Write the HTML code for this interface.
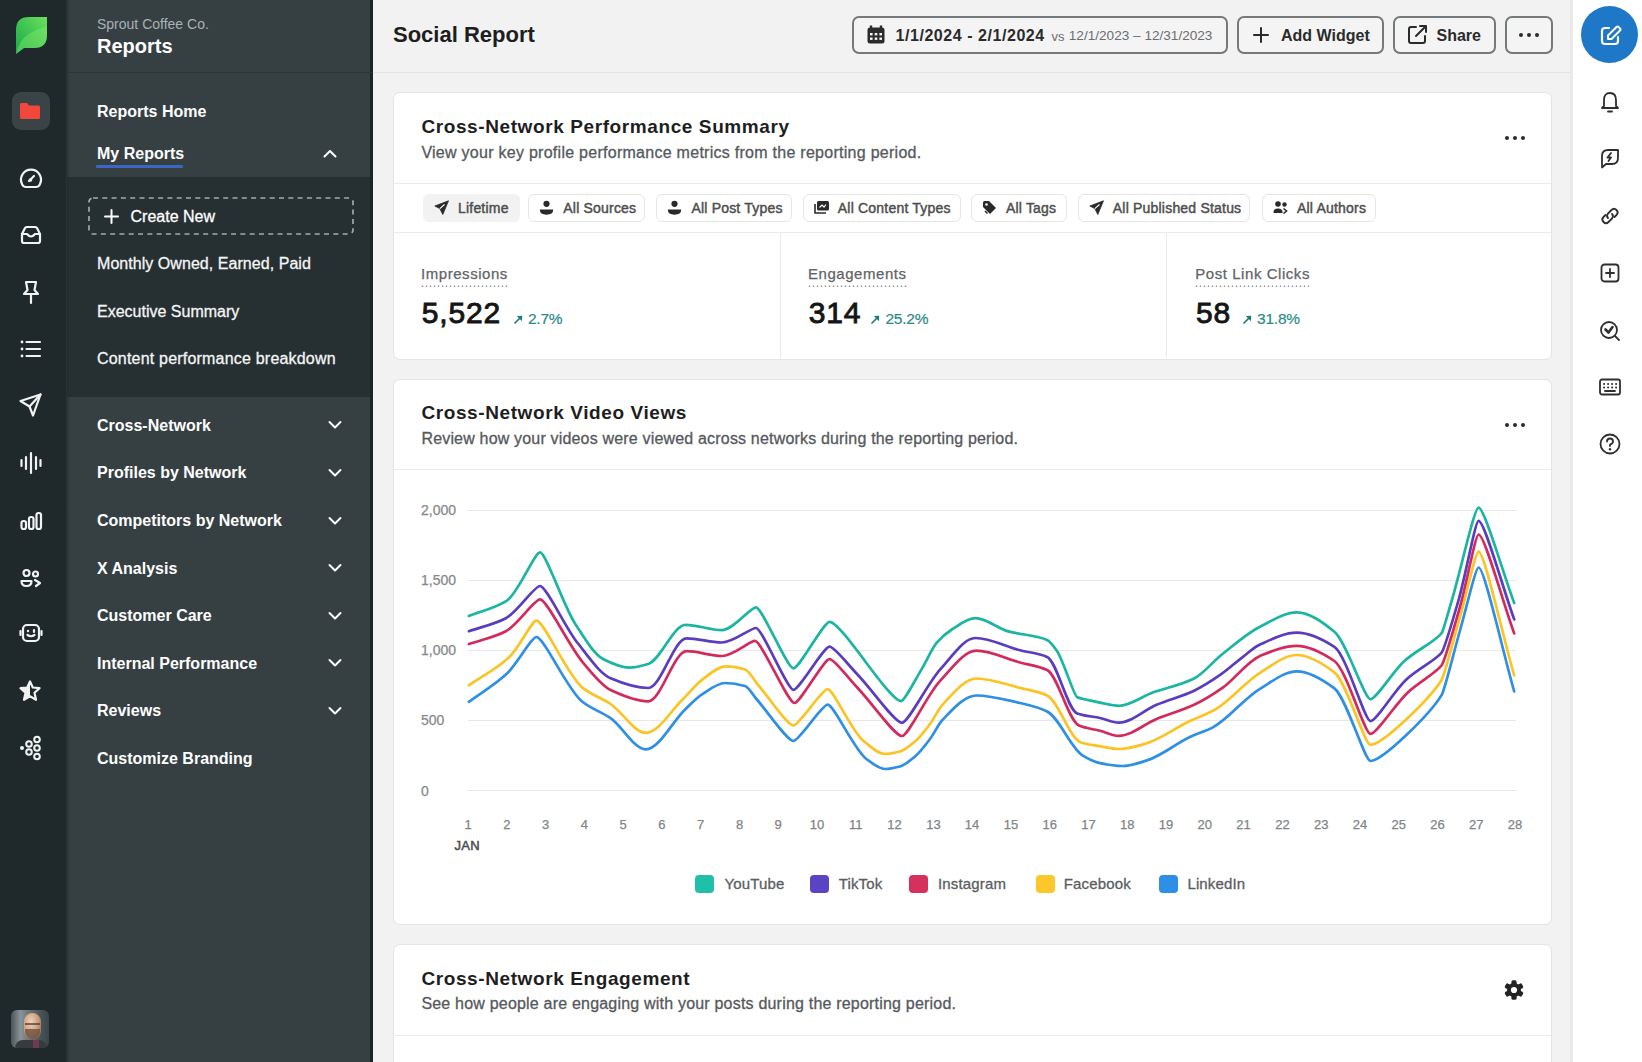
<!DOCTYPE html><html><head><meta charset="utf-8"><style>
html,body{margin:0;padding:0;width:1642px;height:1062px;overflow:hidden;background:#f2f2f2;font-family:"Liberation Sans", sans-serif;}
.t{position:absolute;line-height:1;white-space:nowrap;font-family:"Liberation Sans", sans-serif;}
svg{overflow:visible}
</style></head><body>
<div style="position:absolute;left:0px;top:0px;width:66px;height:1062px;background:#1f292b;"></div>
<div style="position:absolute;left:66px;top:0px;width:307px;height:1062px;background:#364043;"></div>
<div style="position:absolute;left:67px;top:177px;width:306px;height:220px;background:#263032;"></div>
<div style="position:absolute;left:370px;top:0px;width:3px;height:1062px;background:#1c2526;"></div>
<div style="position:absolute;left:64px;top:0px;width:6px;height:1062px;background:linear-gradient(90deg,#1f292b,rgba(31,41,43,0));"></div>
<svg style="position:absolute;left:15px;top:16px;" width="33" height="39" viewBox="0 0 33 39"><defs><linearGradient id="lg" x1="0" y1="1" x2="1" y2="0"><stop offset="0" stop-color="#17a84a"/><stop offset="1" stop-color="#6be05c"/></linearGradient></defs>
<path d="M1,38 L1,14 Q1,1 14,1 L32,1 L32,19 Q32,32 19,32 L9,32 Z" fill="url(#lg)"/>
<path d="M1,38 Q4,24 14,18 Q22,13 32,10 L32,19 Q32,32 19,32 L9,32 Z" fill="#7ee86a" opacity="0.45"/></svg>
<div style="position:absolute;left:12px;top:92px;width:38px;height:38px;background:#3a4447;border-radius:9px;"></div>
<svg style="position:absolute;left:20px;top:103px;" width="20" height="16" viewBox="0 0 20 16"><path d="M0,1.5 Q0,0 1.5,0 L7,0 L9,2.5 L18.5,2.5 Q20,2.5 20,4 L20,14.5 Q20,16 18.5,16 L1.5,16 Q0,16 0,14.5 Z" fill="#f2473a"/></svg>
<svg style="position:absolute;left:20px;top:169px;" width="22" height="20" viewBox="0 0 22 20"><path d="M2,15 A10,10 0 1 1 20,15 Q19,18 16,18 L6,18 Q3,18 2,15 Z" stroke="#f1f3f3" stroke-width="2.2" fill="none" stroke-linecap="round" stroke-linejoin="round"/><path d="M9,12 L14,7" stroke="#f1f3f3" stroke-width="2.2" fill="none" stroke-linecap="round" stroke-linejoin="round"/><circle cx="10.5" cy="11" r="1.8" fill="#f1f3f3"/></svg>
<svg style="position:absolute;left:20px;top:226px;" width="22" height="18" viewBox="0 0 22 18"><path d="M2,8 L5,2 Q6,1 7,1 L15,1 Q16,1 17,2 L20,8 L20,15 Q20,17 18,17 L4,17 Q2,17 2,15 Z" stroke="#f1f3f3" stroke-width="2.2" fill="none" stroke-linecap="round" stroke-linejoin="round"/><path d="M2,8 L7,8 Q11,13 15,8 L20,8" stroke="#f1f3f3" stroke-width="2.2" fill="none" stroke-linecap="round" stroke-linejoin="round"/></svg>
<svg style="position:absolute;left:21px;top:281px;" width="20" height="23" viewBox="0 0 20 23"><path d="M5,1 L15,1 L13.5,9 L17,13 L3,13 L6.5,9 Z" stroke="#f1f3f3" stroke-width="2.2" fill="none" stroke-linecap="round" stroke-linejoin="round"/><path d="M10,13 L10,22" stroke="#f1f3f3" stroke-width="2.2" fill="none" stroke-linecap="round" stroke-linejoin="round"/></svg>
<svg style="position:absolute;left:20px;top:340px;" width="21" height="18" viewBox="0 0 21 18"><circle cx="2" cy="2" r="1.4" fill="#f1f3f3"/><circle cx="2" cy="9" r="1.4" fill="#f1f3f3"/><circle cx="2" cy="16" r="1.4" fill="#f1f3f3"/><path d="M6.5,2 L20,2 M6.5,9 L20,9 M6.5,16 L20,16" stroke="#f1f3f3" stroke-width="2.2" fill="none" stroke-linecap="round" stroke-linejoin="round"/></svg>
<svg style="position:absolute;left:19px;top:393px;" width="23" height="24" viewBox="0 0 23 24"><path d="M1.5,8 L21.5,1.5 L14,22.5 L10.5,13.5 Z" stroke="#f1f3f3" stroke-width="2.2" fill="none" stroke-linecap="round" stroke-linejoin="round"/><path d="M10.5,13.5 L21.5,1.5" stroke="#f1f3f3" stroke-width="2.2" fill="none" stroke-linecap="round" stroke-linejoin="round"/></svg>
<svg style="position:absolute;left:20px;top:452px;" width="22" height="22" viewBox="0 0 22 22"><path d="M1.5,8 L1.5,14 M6,5 L6,17 M11,1 L11,21 M16,5 L16,17 M20.5,8 L20.5,14" stroke="#f1f3f3" stroke-width="2.2" fill="none" stroke-linecap="round" stroke-linejoin="round"/></svg>
<svg style="position:absolute;left:20px;top:512px;" width="23" height="18" viewBox="0 0 23 18"><rect x="1.5" y="9" width="4.5" height="8" rx="2" stroke="#f1f3f3" stroke-width="2.2" fill="none" stroke-linecap="round" stroke-linejoin="round"/><rect x="9" y="5" width="4.5" height="12" rx="2" stroke="#f1f3f3" stroke-width="2.2" fill="none" stroke-linecap="round" stroke-linejoin="round"/><rect x="16.5" y="1" width="4.5" height="16" rx="2" stroke="#f1f3f3" stroke-width="2.2" fill="none" stroke-linecap="round" stroke-linejoin="round"/></svg>
<svg style="position:absolute;left:20px;top:569px;" width="22" height="19" viewBox="0 0 22 19"><circle cx="6.5" cy="4" r="3" stroke="#f1f3f3" stroke-width="2.2" fill="none" stroke-linecap="round" stroke-linejoin="round"/><circle cx="15.5" cy="5" r="2.5" stroke="#f1f3f3" stroke-width="2.2" fill="none" stroke-linecap="round" stroke-linejoin="round"/><path d="M1.5,12 Q1.5,17 6.5,17 Q11.5,17 11.5,12 Z" stroke="#f1f3f3" stroke-width="2.2" fill="none" stroke-linecap="round" stroke-linejoin="round"/><path d="M15,11 L20,14 L16,17" stroke="#f1f3f3" stroke-width="2.2" fill="none" stroke-linecap="round" stroke-linejoin="round"/></svg>
<svg style="position:absolute;left:19px;top:623px;" width="24" height="20" viewBox="0 0 24 20"><rect x="4" y="2" width="16" height="16" rx="4" stroke="#f1f3f3" stroke-width="2.2" fill="none" stroke-linecap="round" stroke-linejoin="round"/><path d="M1.5,8 L1.5,12 M22.5,8 L22.5,12" stroke="#f1f3f3" stroke-width="2.2" fill="none" stroke-linecap="round" stroke-linejoin="round"/><circle cx="9" cy="8" r="1.2" fill="#f1f3f3"/><path d="M8.5,12 Q12,14.5 15.5,12 M15,7 L15,9" stroke="#f1f3f3" stroke-width="2.2" fill="none" stroke-linecap="round" stroke-linejoin="round"/></svg>
<svg style="position:absolute;left:19px;top:680px;" width="22" height="22" viewBox="0 0 22 22"><path d="M11,1.5 L13.8,7.5 L20.5,8.2 L15.5,12.8 L17,19.8 L11,16.3 L5,19.8 L6.5,12.8 L1.5,8.2 L8.2,7.5 Z" stroke="#f1f3f3" stroke-width="2.2" fill="none" stroke-linecap="round" stroke-linejoin="round"/><path d="M11,1.5 L8.2,7.5 L1.5,8.2 L6.5,12.8 L5,19.8 L11,16.3 Z" fill="#f1f3f3"/></svg>
<svg style="position:absolute;left:19px;top:736px;" width="23" height="25" viewBox="0 0 23 25"><circle cx="3" cy="12" r="2" fill="#f1f3f3"/><circle cx="10" cy="8" r="2.8" fill="none" stroke="#f1f3f3" stroke-width="2"/><circle cx="10" cy="16" r="2.8" fill="none" stroke="#f1f3f3" stroke-width="2"/><circle cx="18" cy="3.5" r="2.8" fill="none" stroke="#f1f3f3" stroke-width="2"/><circle cx="18" cy="12" r="2.8" fill="none" stroke="#f1f3f3" stroke-width="2"/><circle cx="18" cy="20.5" r="2.8" fill="none" stroke="#f1f3f3" stroke-width="2"/></svg>
<div style="position:absolute;left:11px;top:1010px;width:38px;height:38px;border-radius:6px;overflow:hidden;background:linear-gradient(90deg,#4b5558 0%,#8a9498 25%,#6d777b 45%,#4a5659 75%,#39454a 100%);">
<div style="position:absolute;left:13px;top:3px;width:17px;height:26px;border-radius:9px 9px 8px 8px;background:radial-gradient(ellipse at 40% 35%,#f0d2b8 0%,#c89a7a 55%,#6e5040 100%);"></div>
<div style="position:absolute;left:14px;top:13px;width:15px;height:2px;background:#4a3830;opacity:0.7;"></div>
<div style="position:absolute;left:14px;top:19px;width:15px;height:10px;border-radius:0 0 8px 8px;background:#6a4c3c;opacity:0.75;"></div>
<div style="position:absolute;left:4px;top:30px;width:32px;height:10px;border-radius:8px 8px 0 0;background:#353b3e;"></div>
<div style="position:absolute;left:22px;top:30px;width:6px;height:8px;background:#6e3c4e;"></div>
</div>
<div class="t" style="left:97px;top:16.90px;font-size:14px;font-weight:400;color:#aab1b3;letter-spacing:0px;">Sprout Coffee Co.</div>
<div class="t" style="left:97px;top:35.60px;font-size:20px;font-weight:700;color:#ffffff;letter-spacing:0px;">Reports</div>
<div style="position:absolute;left:66px;top:72px;width:307px;height:1px;background:#2b3437;"></div>
<div class="t" style="left:97px;top:104.40px;font-size:16px;font-weight:700;color:#ffffff;letter-spacing:0px;">Reports Home</div>
<div class="t" style="left:97px;top:146.40px;font-size:16px;font-weight:700;color:#ffffff;letter-spacing:0px;">My Reports</div>
<div style="position:absolute;left:96px;top:165px;width:87px;height:3px;background:#3d66c4;border-radius:1px;"></div>
<svg style="position:absolute;left:323px;top:149px;" width="14" height="9" viewBox="0 0 14 9"><path d="M1.5,7.5 L7,2 L12.5,7.5" stroke="#fff" stroke-width="2" fill="none" stroke-linecap="round" stroke-linejoin="round"/></svg>
<svg style="position:absolute;left:88px;top:197px;" width="266" height="38" viewBox="0 0 266 38"><rect x="1" y="1" width="264" height="36" rx="4" fill="none" stroke="#a3a9ab" stroke-width="1.7" stroke-dasharray="5 4.3"/></svg>
<svg style="position:absolute;left:104px;top:209px;" width="15" height="15" viewBox="0 0 15 15"><path d="M7.5,1 L7.5,14 M1,7.5 L14,7.5" stroke="#fff" stroke-width="2" fill="none" stroke-linecap="round"/></svg>
<div class="t" style="left:130.5px;top:208.80px;font-size:16px;font-weight:400;color:#ffffff;letter-spacing:0px;-webkit-text-stroke:0.3px #fff;">Create New</div>
<div class="t" style="left:97px;top:256.40px;font-size:16px;font-weight:400;color:#f4f5f5;letter-spacing:0.05px;-webkit-text-stroke:0.3px #f4f5f5;">Monthly Owned, Earned, Paid</div>
<div class="t" style="left:97px;top:304.10px;font-size:16px;font-weight:400;color:#f4f5f5;letter-spacing:0px;-webkit-text-stroke:0.3px #f4f5f5;">Executive Summary</div>
<div class="t" style="left:97px;top:351.40px;font-size:16px;font-weight:400;color:#f4f5f5;letter-spacing:0.2px;-webkit-text-stroke:0.3px #f4f5f5;">Content performance breakdown</div>
<div class="t" style="left:97px;top:417.80px;font-size:16px;font-weight:700;color:#ffffff;letter-spacing:0px;">Cross-Network</div>
<svg style="position:absolute;left:328px;top:420.4px;" width="14" height="10" viewBox="0 0 14 10"><path d="M1.5,2 L7,7.5 L12.5,2" stroke="#fff" stroke-width="2" fill="none" stroke-linecap="round" stroke-linejoin="round"/></svg>
<div class="t" style="left:97px;top:465.40px;font-size:16px;font-weight:700;color:#ffffff;letter-spacing:0px;">Profiles by Network</div>
<svg style="position:absolute;left:328px;top:468.0px;" width="14" height="10" viewBox="0 0 14 10"><path d="M1.5,2 L7,7.5 L12.5,2" stroke="#fff" stroke-width="2" fill="none" stroke-linecap="round" stroke-linejoin="round"/></svg>
<div class="t" style="left:97px;top:513.00px;font-size:16px;font-weight:700;color:#ffffff;letter-spacing:0px;">Competitors by Network</div>
<svg style="position:absolute;left:328px;top:515.6px;" width="14" height="10" viewBox="0 0 14 10"><path d="M1.5,2 L7,7.5 L12.5,2" stroke="#fff" stroke-width="2" fill="none" stroke-linecap="round" stroke-linejoin="round"/></svg>
<div class="t" style="left:97px;top:560.60px;font-size:16px;font-weight:700;color:#ffffff;letter-spacing:0px;">X Analysis</div>
<svg style="position:absolute;left:328px;top:563.2px;" width="14" height="10" viewBox="0 0 14 10"><path d="M1.5,2 L7,7.5 L12.5,2" stroke="#fff" stroke-width="2" fill="none" stroke-linecap="round" stroke-linejoin="round"/></svg>
<div class="t" style="left:97px;top:608.20px;font-size:16px;font-weight:700;color:#ffffff;letter-spacing:0px;">Customer Care</div>
<svg style="position:absolute;left:328px;top:610.8px;" width="14" height="10" viewBox="0 0 14 10"><path d="M1.5,2 L7,7.5 L12.5,2" stroke="#fff" stroke-width="2" fill="none" stroke-linecap="round" stroke-linejoin="round"/></svg>
<div class="t" style="left:97px;top:655.80px;font-size:16px;font-weight:700;color:#ffffff;letter-spacing:0px;">Internal Performance</div>
<svg style="position:absolute;left:328px;top:658.4px;" width="14" height="10" viewBox="0 0 14 10"><path d="M1.5,2 L7,7.5 L12.5,2" stroke="#fff" stroke-width="2" fill="none" stroke-linecap="round" stroke-linejoin="round"/></svg>
<div class="t" style="left:97px;top:703.40px;font-size:16px;font-weight:700;color:#ffffff;letter-spacing:0px;">Reviews</div>
<svg style="position:absolute;left:328px;top:706.0px;" width="14" height="10" viewBox="0 0 14 10"><path d="M1.5,2 L7,7.5 L12.5,2" stroke="#fff" stroke-width="2" fill="none" stroke-linecap="round" stroke-linejoin="round"/></svg>
<div class="t" style="left:97px;top:751.00px;font-size:16px;font-weight:700;color:#ffffff;letter-spacing:0px;">Customize Branding</div>
<div style="position:absolute;left:373px;top:72px;width:1200px;height:1px;background:#e3e3e3;"></div>
<div class="t" style="left:393px;top:24.30px;font-size:22px;font-weight:700;color:#1e1e1e;letter-spacing:0px;">Social Report</div>
<div style="position:absolute;left:852px;top:16px;width:376px;height:38px;box-sizing:border-box;border:2px solid #75797b;border-radius:7px;background:#f4f4f4;"></div>
<svg style="position:absolute;left:867px;top:25px;" width="18" height="19" viewBox="0 0 18 19"><path d="M4,0.5 L4,4 M14,0.5 L14,4" stroke="#2b2b2b" stroke-width="2.4"/><rect x="0.5" y="2.5" width="17" height="16" rx="2.5" fill="#2b2b2b"/><rect x="3" y="8" width="2.6" height="2.4" fill="#f4f4f4"/><rect x="3" y="12.5" width="2.6" height="2.4" fill="#f4f4f4"/><rect x="7.7" y="8" width="2.6" height="2.4" fill="#f4f4f4"/><rect x="7.7" y="12.5" width="2.6" height="2.4" fill="#f4f4f4"/><rect x="12.4" y="8" width="2.6" height="2.4" fill="#f4f4f4"/><rect x="12.4" y="12.5" width="2.6" height="2.4" fill="#f4f4f4"/></svg>
<div class="t" style="left:895.5px;top:27.80px;font-size:16px;font-weight:700;color:#2b2b2b;letter-spacing:0.55px;">1/1/2024 - 2/1/2024</div>
<div class="t" style="left:1051.5px;top:29.95px;font-size:13px;font-weight:400;color:#6b6e70;letter-spacing:0px;">vs</div>
<div class="t" style="left:1068.8px;top:29.44px;font-size:13.6px;font-weight:400;color:#6b6e70;letter-spacing:0px;">12/1/2023 – 12/31/2023</div>
<div style="position:absolute;left:1237px;top:16px;width:147px;height:38px;box-sizing:border-box;border:2px solid #75797b;border-radius:7px;background:#f4f4f4;"></div>
<svg style="position:absolute;left:1253px;top:27px;" width="16" height="16" viewBox="0 0 16 16"><path d="M8,1 L8,15 M1,8 L15,8" stroke="#2b2b2b" stroke-width="2" fill="none" stroke-linecap="round"/></svg>
<div class="t" style="left:1281px;top:28.20px;font-size:16px;font-weight:700;color:#2b2b2b;letter-spacing:0px;">Add Widget</div>
<div style="position:absolute;left:1393px;top:16px;width:103px;height:38px;box-sizing:border-box;border:2px solid #75797b;border-radius:7px;background:#f4f4f4;"></div>
<svg style="position:absolute;left:1407px;top:24px;" width="21" height="21" viewBox="0 0 21 21"><path d="M9,3 L4,3 Q2,3 2,5 L2,17 Q2,19 4,19 L16,19 Q18,19 18,17 L18,12" stroke="#2b2b2b" stroke-width="2" fill="none" stroke-linecap="round" stroke-linejoin="round"/><path d="M9,12 L19,2 M13,2 L19,2 L19,8" stroke="#2b2b2b" stroke-width="2" fill="none" stroke-linecap="round" stroke-linejoin="round"/></svg>
<div class="t" style="left:1436.5px;top:28.20px;font-size:16px;font-weight:700;color:#2b2b2b;letter-spacing:0px;">Share</div>
<div style="position:absolute;left:1505px;top:16px;width:48px;height:38px;box-sizing:border-box;border:2px solid #75797b;border-radius:7px;background:#f4f4f4;"></div>
<div style="position:absolute;left:1519px;top:33px;width:4px;height:4px;background:#2b2b2b;border-radius:50%;"></div>
<div style="position:absolute;left:1527px;top:33px;width:4px;height:4px;background:#2b2b2b;border-radius:50%;"></div>
<div style="position:absolute;left:1535px;top:33px;width:4px;height:4px;background:#2b2b2b;border-radius:50%;"></div>
<div style="position:absolute;left:1570px;top:0px;width:3px;height:1062px;background:#e9e9e9;"></div>
<div style="position:absolute;left:1573px;top:0px;width:69px;height:1062px;background:#ffffff;"></div>
<div style="position:absolute;left:1581px;top:6px;width:57px;height:57px;background:#1f77c7;border-radius:50%;"></div>
<svg style="position:absolute;left:1600px;top:25px;" width="21" height="21" viewBox="0 0 21 21"><path d="M9,3 L5,3 Q2,3 2,6 L2,16 Q2,19 5,19 L15,19 Q18,19 18,16 L18,12" stroke="#fff" stroke-width="2.2" fill="none" stroke-linecap="round" stroke-linejoin="round"/><path d="M8,14 L8,10.5 L16.5,2 Q17.5,1 18.5,2 L20,3.5 Q21,4.5 20,5.5 L11.5,14 Z" stroke="#fff" stroke-width="2" fill="none" stroke-linejoin="round"/></svg>
<svg style="position:absolute;left:1600px;top:91px;" width="20" height="23" viewBox="0 0 20 23"><path d="M2,17 L4,15 L4,9 Q4,2 10,2 Q16,2 16,9 L16,15 L18,17 Z" stroke="#2e2e2e" stroke-width="1.8" fill="none" stroke-linecap="round" stroke-linejoin="round"/><path d="M8,20.5 L12,20.5" stroke="#2e2e2e" stroke-width="1.8" fill="none" stroke-linecap="round" stroke-linejoin="round"/></svg>
<svg style="position:absolute;left:1600px;top:148px;" width="20" height="21" viewBox="0 0 20 21"><path d="M2,19.5 L2,8 Q2,2 8,2 L18,2 L18,10 Q18,16 12,16 L6,16 Z" stroke="#2e2e2e" stroke-width="1.8" fill="none" stroke-linecap="round" stroke-linejoin="round"/><path d="M11,5 L7.5,9.5 L11,9.5 L8.5,13" stroke="#2e2e2e" stroke-width="1.8" fill="none" stroke-linecap="round" stroke-linejoin="round"/></svg>
<svg style="position:absolute;left:1599px;top:205px;" width="22" height="22" viewBox="0 0 22 22"><path d="M9,13 Q7,11 9,8.5 L12.5,5 Q15,2.5 17.5,5 Q20,7.5 17.5,10 L15.5,12" stroke="#2e2e2e" stroke-width="1.8" fill="none" stroke-linecap="round" stroke-linejoin="round"/><path d="M13,9 Q15,11 13,13.5 L9.5,17 Q7,19.5 4.5,17 Q2,14.5 4.5,12 L6.5,10" stroke="#2e2e2e" stroke-width="1.8" fill="none" stroke-linecap="round" stroke-linejoin="round"/></svg>
<svg style="position:absolute;left:1600px;top:263px;" width="20" height="20" viewBox="0 0 20 20"><rect x="1.5" y="1.5" width="17" height="17" rx="3" stroke="#2e2e2e" stroke-width="1.8" fill="none" stroke-linecap="round" stroke-linejoin="round"/><path d="M10,6 L10,14 M6,10 L14,10" stroke="#2e2e2e" stroke-width="1.8" fill="none" stroke-linecap="round" stroke-linejoin="round"/></svg>
<svg style="position:absolute;left:1599px;top:320px;" width="22" height="22" viewBox="0 0 22 22"><circle cx="10" cy="10" r="8" stroke="#2e2e2e" stroke-width="1.8" fill="none" stroke-linecap="round" stroke-linejoin="round"/><path d="M16,16 L20,20" stroke="#2e2e2e" stroke-width="1.8" fill="none" stroke-linecap="round" stroke-linejoin="round"/><path d="M6.5,9.5 L9.5,12.5 L13.5,7" stroke="#2e2e2e" stroke-width="2.6" fill="none" stroke-linecap="round" stroke-linejoin="round"/></svg>
<svg style="position:absolute;left:1599px;top:378px;" width="22" height="18" viewBox="0 0 22 18"><rect x="1" y="1.5" width="20" height="15" rx="2" stroke="#2e2e2e" stroke-width="1.8" fill="none" stroke-linecap="round" stroke-linejoin="round"/><path d="M5,6 L5.2,6 M9,6 L9.2,6 M13,6 L13.2,6 M17,6 L17.2,6 M5,9.5 L5.2,9.5 M9,9.5 L9.2,9.5 M13,9.5 L13.2,9.5 M17,9.5 L17.2,9.5 M6,13 L16,13" stroke="#2e2e2e" stroke-width="1.8" fill="none" stroke-linecap="round" stroke-linejoin="round"/></svg>
<svg style="position:absolute;left:1599px;top:433px;" width="22" height="22" viewBox="0 0 22 22"><circle cx="11" cy="11" r="9.5" stroke="#2e2e2e" stroke-width="1.8" fill="none" stroke-linecap="round" stroke-linejoin="round"/><path d="M8,8.5 Q8,5.5 11,5.5 Q14,5.5 14,8.5 Q14,10.5 11,11.5 L11,13" stroke="#2e2e2e" stroke-width="1.8" fill="none" stroke-linecap="round" stroke-linejoin="round"/><circle cx="11" cy="16.3" r="1.2" fill="#2e2e2e"/></svg>
<div style="position:absolute;left:393px;top:92px;width:1159px;height:267.5px;box-sizing:border-box;background:#fff;border:1.5px solid #e4e4e4;border-radius:7px;"></div>
<div class="t" style="left:421.4px;top:116.65px;font-size:19px;font-weight:700;color:#1e1e1e;letter-spacing:0.6px;">Cross-Network Performance Summary</div>
<div class="t" style="left:421.4px;top:144.80px;font-size:16px;font-weight:400;color:#55595c;letter-spacing:0.27px;-webkit-text-stroke:0.3px #55595c;">View your key profile performance metrics from the reporting period.</div>
<div style="position:absolute;left:1504.5px;top:136px;width:4px;height:4px;background:#2b2b2b;border-radius:50%;"></div>
<div style="position:absolute;left:1512.5px;top:136px;width:4px;height:4px;background:#2b2b2b;border-radius:50%;"></div>
<div style="position:absolute;left:1520.5px;top:136px;width:4px;height:4px;background:#2b2b2b;border-radius:50%;"></div>
<div style="position:absolute;left:394px;top:182.5px;width:1157px;height:1px;background:#ebebeb;"></div>
<div style="position:absolute;left:394px;top:231.5px;width:1157px;height:1px;background:#ebebeb;"></div>
<div style="position:absolute;left:423px;top:194px;width:97px;height:27.5px;background:#f2f2f2;border-radius:6px;"></div>
<svg style="position:absolute;left:434px;top:200px;" width="15" height="15" viewBox="0 0 15 15"><path d="M14.5,0.8 L0.8,6 L5.8,8.6 L8.8,14.5 Z" fill="#2a2a2a" stroke="#2a2a2a" stroke-width="0.8" stroke-linejoin="round"/><path d="M5.8,8.6 L10.5,4.5" stroke="#fff" stroke-width="1.1"/></svg>
<div class="t" style="left:458px;top:200.70px;font-size:14px;font-weight:400;color:#4e4e4e;letter-spacing:0.2px;-webkit-text-stroke:0.45px #4e4e4e;">Lifetime</div>
<div style="position:absolute;left:528.3px;top:194px;width:117.20000000000005px;height:27.5px;box-sizing:border-box;border:1.5px solid #e6e6e6;border-radius:6px;background:#fff;"></div>
<svg style="position:absolute;left:539.3px;top:200px;" width="15" height="15" viewBox="0 0 15 15"><circle cx="7.5" cy="3.8" r="3.1" fill="#2a2a2a"/><path d="M0.8,9.6 L14.2,9.6 Q14.2,14.8 7.5,14.8 Q0.8,14.8 0.8,9.6 Z" fill="#2a2a2a"/></svg>
<div class="t" style="left:563.3px;top:200.70px;font-size:14px;font-weight:400;color:#4e4e4e;letter-spacing:0.2px;-webkit-text-stroke:0.45px #4e4e4e;">All Sources</div>
<div style="position:absolute;left:656.4px;top:194px;width:135.30000000000007px;height:27.5px;box-sizing:border-box;border:1.5px solid #e6e6e6;border-radius:6px;background:#fff;"></div>
<svg style="position:absolute;left:667.4px;top:200px;" width="15" height="15" viewBox="0 0 15 15"><circle cx="7.5" cy="3.8" r="3.1" fill="#2a2a2a"/><path d="M0.8,9.6 L14.2,9.6 Q14.2,14.8 7.5,14.8 Q0.8,14.8 0.8,9.6 Z" fill="#2a2a2a"/></svg>
<div class="t" style="left:691.4px;top:200.70px;font-size:14px;font-weight:400;color:#4e4e4e;letter-spacing:0.2px;-webkit-text-stroke:0.45px #4e4e4e;">All Post Types</div>
<div style="position:absolute;left:802.8px;top:194px;width:158.0px;height:27.5px;box-sizing:border-box;border:1.5px solid #e6e6e6;border-radius:6px;background:#fff;"></div>
<svg style="position:absolute;left:813.8px;top:200px;" width="15" height="15" viewBox="0 0 15 15"><rect x="3" y="1" width="12" height="9.5" rx="1.5" fill="#2a2a2a"/><path d="M1,4 L1,13 L12,13" stroke="#2a2a2a" stroke-width="1.6" fill="none"/><path d="M5.5,7.5 L8,5 L10,7 L12,4.5" stroke="#fff" stroke-width="1.2" fill="none"/></svg>
<div class="t" style="left:837.8px;top:200.70px;font-size:14px;font-weight:400;color:#4e4e4e;letter-spacing:0.2px;-webkit-text-stroke:0.45px #4e4e4e;">All Content Types</div>
<div style="position:absolute;left:970.9px;top:194px;width:95.89999999999998px;height:27.5px;box-sizing:border-box;border:1.5px solid #e6e6e6;border-radius:6px;background:#fff;"></div>
<svg style="position:absolute;left:981.9px;top:200px;" width="15" height="15" viewBox="0 0 15 15"><path d="M1,2.5 Q1,1 2.5,1 L7,1 L14,8 L8,14 L1,7 Z" fill="#2a2a2a"/><circle cx="4.5" cy="4.5" r="1.3" fill="#fff"/><path d="M3,11 L5.5,13.5" stroke="#2a2a2a" stroke-width="1.4"/></svg>
<div class="t" style="left:1005.9px;top:200.70px;font-size:14px;font-weight:400;color:#4e4e4e;letter-spacing:0.2px;-webkit-text-stroke:0.45px #4e4e4e;">All Tags</div>
<div style="position:absolute;left:1077.8px;top:194px;width:172.5px;height:27.5px;box-sizing:border-box;border:1.5px solid #e6e6e6;border-radius:6px;background:#fff;"></div>
<svg style="position:absolute;left:1088.8px;top:200px;" width="15" height="15" viewBox="0 0 15 15"><path d="M14.5,0.8 L0.8,6 L5.8,8.6 L8.8,14.5 Z" fill="#2a2a2a" stroke="#2a2a2a" stroke-width="0.8" stroke-linejoin="round"/><path d="M5.8,8.6 L10.5,4.5" stroke="#fff" stroke-width="1.1"/></svg>
<div class="t" style="left:1112.8px;top:200.70px;font-size:14px;font-weight:400;color:#4e4e4e;letter-spacing:0.2px;-webkit-text-stroke:0.45px #4e4e4e;">All Published Status</div>
<div style="position:absolute;left:1262px;top:194px;width:114px;height:27.5px;box-sizing:border-box;border:1.5px solid #e6e6e6;border-radius:6px;background:#fff;"></div>
<svg style="position:absolute;left:1273px;top:200px;" width="15" height="15" viewBox="0 0 15 15"><circle cx="5" cy="4" r="2.8" fill="#2a2a2a"/><circle cx="11.5" cy="4.5" r="2.2" fill="#2a2a2a"/><path d="M0.5,12 Q0.5,8.5 5,8.5 Q9.5,8.5 9.5,12 L9.5,13 L0.5,13 Z" fill="#2a2a2a"/><path d="M10.5,8.5 L13.5,11 L10.5,13.5" stroke="#2a2a2a" stroke-width="1.6" fill="none"/></svg>
<div class="t" style="left:1297px;top:200.70px;font-size:14px;font-weight:400;color:#4e4e4e;letter-spacing:0.2px;-webkit-text-stroke:0.45px #4e4e4e;">All Authors</div>
<div style="position:absolute;left:779.5px;top:232px;width:1px;height:126px;background:#ebebeb;"></div>
<div style="position:absolute;left:1165.5px;top:232px;width:1px;height:126px;background:#ebebeb;"></div>
<div class="t" style="left:421px;top:266.25px;font-size:15px;font-weight:400;color:#606467;letter-spacing:0.55px;-webkit-text-stroke:0.25px #606467;">Impressions</div>
<svg style="position:absolute;left:421px;top:284.5px;" width="89" height="3" viewBox="0 0 89 3"><line x1="0.8" y1="1.2" x2="88.5" y2="1.2" stroke="#8f9294" stroke-width="1.4" stroke-dasharray="1.4 2.6"/></svg>
<div class="t" style="left:421.8px;top:297.70px;font-size:30px;font-weight:400;color:#151515;letter-spacing:0.8px;-webkit-text-stroke:0.9px #151515;">5,522</div>
<div class="t" style="left:808px;top:266.25px;font-size:15px;font-weight:400;color:#606467;letter-spacing:0.55px;-webkit-text-stroke:0.25px #606467;">Engagements</div>
<svg style="position:absolute;left:808px;top:284.5px;" width="100" height="3" viewBox="0 0 100 3"><line x1="0.8" y1="1.2" x2="99.5" y2="1.2" stroke="#8f9294" stroke-width="1.4" stroke-dasharray="1.4 2.6"/></svg>
<div class="t" style="left:808.8px;top:297.70px;font-size:30px;font-weight:400;color:#151515;letter-spacing:0.8px;-webkit-text-stroke:0.9px #151515;">314</div>
<div class="t" style="left:1195.3px;top:266.25px;font-size:15px;font-weight:400;color:#606467;letter-spacing:0.55px;-webkit-text-stroke:0.25px #606467;">Post Link Clicks</div>
<svg style="position:absolute;left:1195.3px;top:284.5px;" width="115.3" height="3" viewBox="0 0 115.3 3"><line x1="0.8" y1="1.2" x2="114.8" y2="1.2" stroke="#8f9294" stroke-width="1.4" stroke-dasharray="1.4 2.6"/></svg>
<div class="t" style="left:1196.1px;top:297.70px;font-size:30px;font-weight:400;color:#151515;letter-spacing:0.8px;-webkit-text-stroke:0.9px #151515;">58</div>

<svg style="position:absolute;left:513.9px;top:314.5px;" width="9" height="9" viewBox="0 0 9 9"><path d="M1,8 L6,3" stroke="#1d7d78" stroke-width="1.7" stroke-linecap="round"/><path d="M2.8,1 L8.2,0.8 L8,6.2 Z" fill="#1d7d78"/></svg>
<div class="t" style="left:527.9px;top:311.22px;font-size:15.5px;font-weight:400;color:#2a8a86;letter-spacing:-0.2px;-webkit-text-stroke:0.2px #2a8a86;">2.7%</div>
<svg style="position:absolute;left:870.7px;top:314.5px;" width="9" height="9" viewBox="0 0 9 9"><path d="M1,8 L6,3" stroke="#1d7d78" stroke-width="1.7" stroke-linecap="round"/><path d="M2.8,1 L8.2,0.8 L8,6.2 Z" fill="#1d7d78"/></svg>
<div class="t" style="left:885.4px;top:311.22px;font-size:15.5px;font-weight:400;color:#2a8a86;letter-spacing:-0.2px;-webkit-text-stroke:0.2px #2a8a86;">25.2%</div>
<svg style="position:absolute;left:1243px;top:314.5px;" width="9" height="9" viewBox="0 0 9 9"><path d="M1,8 L6,3" stroke="#1d7d78" stroke-width="1.7" stroke-linecap="round"/><path d="M2.8,1 L8.2,0.8 L8,6.2 Z" fill="#1d7d78"/></svg>
<div class="t" style="left:1257px;top:311.22px;font-size:15.5px;font-weight:400;color:#2a8a86;letter-spacing:-0.2px;-webkit-text-stroke:0.2px #2a8a86;">31.8%</div>
<div style="position:absolute;left:393px;top:378.5px;width:1159px;height:546.5px;box-sizing:border-box;background:#fff;border:1.5px solid #e4e4e4;border-radius:7px;"></div>
<div class="t" style="left:421.4px;top:403.05px;font-size:19px;font-weight:700;color:#1e1e1e;letter-spacing:0.6px;">Cross-Network Video Views</div>
<div class="t" style="left:421.4px;top:430.80px;font-size:16px;font-weight:400;color:#55595c;letter-spacing:0.18px;-webkit-text-stroke:0.3px #55595c;">Review how your videos were viewed across networks during the reporting period.</div>
<div style="position:absolute;left:1504.5px;top:423px;width:4px;height:4px;background:#2b2b2b;border-radius:50%;"></div>
<div style="position:absolute;left:1512.5px;top:423px;width:4px;height:4px;background:#2b2b2b;border-radius:50%;"></div>
<div style="position:absolute;left:1520.5px;top:423px;width:4px;height:4px;background:#2b2b2b;border-radius:50%;"></div>
<div style="position:absolute;left:394px;top:469px;width:1157px;height:1px;background:#ebebeb;"></div>
<div style="position:absolute;left:468px;top:509.5px;width:1048px;height:1px;background:#e8e8e8;"></div>
<div class="t" style="left:421px;top:502.90px;font-size:14px;font-weight:400;color:#86898b;letter-spacing:0px;-webkit-text-stroke:0.25px #86898b;">2,000</div>
<div style="position:absolute;left:468px;top:579.5px;width:1048px;height:1px;background:#e8e8e8;"></div>
<div class="t" style="left:421px;top:573.05px;font-size:14px;font-weight:400;color:#86898b;letter-spacing:0px;-webkit-text-stroke:0.25px #86898b;">1,500</div>
<div style="position:absolute;left:468px;top:650.0px;width:1048px;height:1px;background:#e8e8e8;"></div>
<div class="t" style="left:421px;top:643.20px;font-size:14px;font-weight:400;color:#86898b;letter-spacing:0px;-webkit-text-stroke:0.25px #86898b;">1,000</div>
<div style="position:absolute;left:468px;top:720.0px;width:1048px;height:1px;background:#e8e8e8;"></div>
<div class="t" style="left:421px;top:713.35px;font-size:14px;font-weight:400;color:#86898b;letter-spacing:0px;-webkit-text-stroke:0.25px #86898b;">500</div>
<div style="position:absolute;left:468px;top:790.0px;width:1048px;height:1px;background:#e8e8e8;"></div>
<div class="t" style="left:421px;top:783.50px;font-size:14px;font-weight:400;color:#86898b;letter-spacing:0px;-webkit-text-stroke:0.25px #86898b;">0</div>
<div class="t" style="left:448.0px;width:40px;text-align:center;top:818.35px;font-size:13px;color:#818487;-webkit-text-stroke:0.25px #818487;">1</div>
<div class="t" style="left:486.8px;width:40px;text-align:center;top:818.35px;font-size:13px;color:#818487;-webkit-text-stroke:0.25px #818487;">2</div>
<div class="t" style="left:525.6px;width:40px;text-align:center;top:818.35px;font-size:13px;color:#818487;-webkit-text-stroke:0.25px #818487;">3</div>
<div class="t" style="left:564.3px;width:40px;text-align:center;top:818.35px;font-size:13px;color:#818487;-webkit-text-stroke:0.25px #818487;">4</div>
<div class="t" style="left:603.1px;width:40px;text-align:center;top:818.35px;font-size:13px;color:#818487;-webkit-text-stroke:0.25px #818487;">5</div>
<div class="t" style="left:641.9px;width:40px;text-align:center;top:818.35px;font-size:13px;color:#818487;-webkit-text-stroke:0.25px #818487;">6</div>
<div class="t" style="left:680.7px;width:40px;text-align:center;top:818.35px;font-size:13px;color:#818487;-webkit-text-stroke:0.25px #818487;">7</div>
<div class="t" style="left:719.5px;width:40px;text-align:center;top:818.35px;font-size:13px;color:#818487;-webkit-text-stroke:0.25px #818487;">8</div>
<div class="t" style="left:758.2px;width:40px;text-align:center;top:818.35px;font-size:13px;color:#818487;-webkit-text-stroke:0.25px #818487;">9</div>
<div class="t" style="left:797.0px;width:40px;text-align:center;top:818.35px;font-size:13px;color:#818487;-webkit-text-stroke:0.25px #818487;">10</div>
<div class="t" style="left:835.8px;width:40px;text-align:center;top:818.35px;font-size:13px;color:#818487;-webkit-text-stroke:0.25px #818487;">11</div>
<div class="t" style="left:874.6px;width:40px;text-align:center;top:818.35px;font-size:13px;color:#818487;-webkit-text-stroke:0.25px #818487;">12</div>
<div class="t" style="left:913.4px;width:40px;text-align:center;top:818.35px;font-size:13px;color:#818487;-webkit-text-stroke:0.25px #818487;">13</div>
<div class="t" style="left:952.1px;width:40px;text-align:center;top:818.35px;font-size:13px;color:#818487;-webkit-text-stroke:0.25px #818487;">14</div>
<div class="t" style="left:990.9px;width:40px;text-align:center;top:818.35px;font-size:13px;color:#818487;-webkit-text-stroke:0.25px #818487;">15</div>
<div class="t" style="left:1029.7px;width:40px;text-align:center;top:818.35px;font-size:13px;color:#818487;-webkit-text-stroke:0.25px #818487;">16</div>
<div class="t" style="left:1068.5px;width:40px;text-align:center;top:818.35px;font-size:13px;color:#818487;-webkit-text-stroke:0.25px #818487;">17</div>
<div class="t" style="left:1107.3px;width:40px;text-align:center;top:818.35px;font-size:13px;color:#818487;-webkit-text-stroke:0.25px #818487;">18</div>
<div class="t" style="left:1146.0px;width:40px;text-align:center;top:818.35px;font-size:13px;color:#818487;-webkit-text-stroke:0.25px #818487;">19</div>
<div class="t" style="left:1184.8px;width:40px;text-align:center;top:818.35px;font-size:13px;color:#818487;-webkit-text-stroke:0.25px #818487;">20</div>
<div class="t" style="left:1223.6px;width:40px;text-align:center;top:818.35px;font-size:13px;color:#818487;-webkit-text-stroke:0.25px #818487;">21</div>
<div class="t" style="left:1262.4px;width:40px;text-align:center;top:818.35px;font-size:13px;color:#818487;-webkit-text-stroke:0.25px #818487;">22</div>
<div class="t" style="left:1301.2px;width:40px;text-align:center;top:818.35px;font-size:13px;color:#818487;-webkit-text-stroke:0.25px #818487;">23</div>
<div class="t" style="left:1339.9px;width:40px;text-align:center;top:818.35px;font-size:13px;color:#818487;-webkit-text-stroke:0.25px #818487;">24</div>
<div class="t" style="left:1378.7px;width:40px;text-align:center;top:818.35px;font-size:13px;color:#818487;-webkit-text-stroke:0.25px #818487;">25</div>
<div class="t" style="left:1417.5px;width:40px;text-align:center;top:818.35px;font-size:13px;color:#818487;-webkit-text-stroke:0.25px #818487;">26</div>
<div class="t" style="left:1456.3px;width:40px;text-align:center;top:818.35px;font-size:13px;color:#818487;-webkit-text-stroke:0.25px #818487;">27</div>
<div class="t" style="left:1495.1px;width:40px;text-align:center;top:818.35px;font-size:13px;color:#818487;-webkit-text-stroke:0.25px #818487;">28</div>
<div class="t" style="left:454.5px;top:839.45px;font-size:13px;font-weight:400;color:#4a4d4f;letter-spacing:0.3px;-webkit-text-stroke:0.5px #4a4d4f;">JAN</div>
<svg style="position:absolute;left:0px;top:0px;pointer-events:none;" width="1642" height="1062" viewBox="0 0 1642 1062"><path d="M468.9,701.8 C481.6,692.4 494.3,685.4 507.0,673.5 C516.8,664.3 531.6,637.0 536.5,637.0 C544.1,637.0 567.1,689.6 582.4,701.8 C591.8,709.3 601.2,711.7 610.6,718.2 C622.4,726.4 634.1,749.3 645.9,749.3 C659.1,749.3 672.4,721.3 685.6,708.9 C691.1,703.8 696.5,697.9 702.0,694.4 C709.7,689.5 717.3,683.0 725.0,683.0 C731.7,683.0 738.3,684.1 745.0,686.0 C748.7,687.0 752.3,694.3 756.0,698.5 C768.5,712.7 787.2,741.0 793.4,741.0 C799.1,741.0 821.9,704.7 827.6,704.7 C834.2,704.7 853.9,750.0 867.0,759.5 C873.0,763.8 879.0,769.0 885.0,769.0 C890.0,769.0 895.0,767.8 900.0,766.5 C905.0,765.2 910.0,760.7 915.0,756.5 C920.0,752.3 925.0,745.7 930.0,739.0 C934.1,733.5 938.3,724.3 942.4,720.0 C953.7,708.2 965.0,695.5 976.3,695.5 C990.9,695.5 1005.4,699.7 1020.0,703.0 C1029.0,705.1 1038.1,707.1 1047.1,711.5 C1059.0,717.3 1071.0,748.4 1082.9,755.7 C1088.6,759.2 1094.3,762.1 1100.0,763.2 C1107.5,764.7 1115.1,766.0 1122.6,766.0 C1130.7,766.0 1138.9,762.9 1147.0,760.4 C1161.5,755.9 1175.9,743.5 1190.4,736.8 C1197.9,733.3 1205.4,731.4 1212.9,727.4 C1228.6,719.0 1244.3,698.1 1260.0,688.8 C1272.3,681.5 1284.5,671.3 1296.8,671.3 C1309.3,671.3 1321.9,679.0 1334.4,688.3 C1346.4,697.2 1364.5,761.0 1370.5,761.0 C1382.4,761.0 1429.8,714.6 1441.7,694.9 C1444.8,689.8 1453.9,651.6 1460.0,630.5 C1466.2,609.1 1475.5,567.5 1478.6,567.5 C1484.5,567.5 1502.3,650.1 1514.2,691.4" stroke="#2f8fe3" stroke-width="2.7" fill="none" stroke-linecap="round" stroke-linejoin="round"/><path d="M468.9,685.3 C482.4,675.9 495.9,669.7 509.4,657.0 C518.4,648.5 532.0,620.6 536.5,620.6 C544.1,620.6 567.1,675.3 582.4,687.6 C591.8,695.2 601.2,697.7 610.6,704.0 C622.4,711.9 634.1,732.8 645.9,732.8 C658.4,732.8 671.0,710.6 683.5,698.5 C689.7,692.6 695.8,684.3 702.0,679.8 C710.0,674.0 718.0,666.4 726.0,666.4 C732.3,666.4 738.7,667.6 745.0,669.5 C749.4,670.8 753.7,679.9 758.1,685.0 C769.9,698.7 787.5,725.4 793.4,725.4 C799.1,725.4 821.9,689.2 827.6,689.2 C833.5,689.2 851.4,730.8 863.3,740.7 C870.5,746.7 877.8,754.0 885.0,754.0 C890.0,754.0 895.0,752.8 900.0,751.5 C905.0,750.2 910.0,745.7 915.0,741.5 C920.0,737.3 925.0,730.7 930.0,724.0 C934.1,718.5 938.3,709.4 942.4,704.9 C953.7,692.6 965.0,678.5 976.3,678.5 C990.9,678.5 1005.4,684.3 1020.0,687.9 C1029.0,690.1 1038.1,691.4 1047.1,695.5 C1058.4,700.6 1069.7,738.9 1081.0,742.5 C1087.3,744.5 1093.7,745.1 1100.0,746.2 C1106.3,747.3 1112.5,749.0 1118.8,749.0 C1127.0,749.0 1135.1,746.5 1143.3,744.4 C1158.4,740.5 1173.4,729.1 1188.5,721.8 C1197.9,717.3 1207.3,714.1 1216.7,708.6 C1231.1,700.1 1245.6,681.5 1260.0,672.8 C1272.3,665.4 1284.5,655.0 1296.8,655.0 C1309.3,655.0 1321.9,662.9 1334.4,672.3 C1346.4,681.4 1364.5,744.9 1370.5,744.9 C1382.4,744.9 1429.8,699.1 1441.7,679.7 C1444.8,674.7 1453.9,638.2 1460.0,617.0 C1466.2,595.5 1475.5,551.7 1478.6,551.7 C1484.5,551.7 1502.3,634.2 1514.2,675.5" stroke="#fbc425" stroke-width="2.7" fill="none" stroke-linecap="round" stroke-linejoin="round"/><path d="M468.9,644.1 C481.2,639.8 493.6,637.5 505.9,631.2 C517.3,625.4 534.3,599.4 540.0,599.4 C547.1,599.4 568.3,645.2 582.4,661.8 C591.8,672.9 601.2,685.5 610.6,690.0 C623.1,695.9 635.7,701.3 648.2,701.3 C661.0,701.3 673.8,651.2 686.6,651.2 C698.4,651.2 710.1,656.0 721.9,656.0 C732.9,656.0 749.5,640.9 755.0,640.9 C761.6,640.9 787.8,703.0 794.4,703.0 C800.3,703.0 823.7,659.1 829.6,659.1 C834.3,659.1 848.3,678.1 857.7,688.0 C872.4,703.5 894.5,736.0 901.9,736.0 C908.3,736.0 927.6,693.9 940.5,680.4 C952.4,667.9 964.4,650.6 976.3,650.6 C990.9,650.6 1005.4,658.5 1020.0,662.5 C1029.0,665.0 1038.1,665.8 1047.1,670.0 C1057.8,675.0 1068.4,721.2 1079.1,725.6 C1086.1,728.5 1093.0,729.0 1100.0,730.8 C1106.3,732.4 1112.5,735.9 1118.8,735.9 C1131.4,735.9 1143.9,724.2 1156.5,719.0 C1169.0,713.9 1181.6,710.7 1194.1,704.8 C1203.5,700.4 1213.0,694.5 1222.4,687.9 C1234.9,679.2 1247.5,661.1 1260.0,655.9 C1272.3,650.9 1284.5,645.9 1296.8,645.9 C1309.3,645.9 1321.9,652.6 1334.4,661.0 C1346.4,669.1 1364.5,733.9 1370.5,733.9 C1376.7,733.9 1395.4,703.9 1407.8,692.4 C1419.1,681.9 1436.0,673.0 1441.7,665.3 C1444.8,661.2 1453.9,628.2 1460.0,606.8 C1466.2,585.1 1475.5,534.5 1478.6,534.5 C1484.5,534.5 1502.3,600.4 1514.2,633.4" stroke="#d22a5c" stroke-width="2.7" fill="none" stroke-linecap="round" stroke-linejoin="round"/><path d="M468.9,631.2 C481.2,626.9 493.6,624.6 505.9,618.2 C517.3,612.3 534.3,586.0 540.0,586.0 C546.3,586.0 565.1,627.4 577.6,643.0 C588.6,656.7 599.6,673.5 610.6,678.2 C623.1,683.5 635.7,688.0 648.2,688.0 C661.0,688.0 673.8,638.4 686.6,638.4 C698.4,638.4 710.1,642.5 721.9,642.5 C733.3,642.5 750.3,628.0 756.0,628.0 C762.2,628.0 787.2,689.8 793.4,689.8 C799.4,689.8 823.6,646.7 829.6,646.7 C834.3,646.7 848.3,665.0 857.7,674.7 C872.4,690.0 894.5,722.8 901.9,722.8 C908.3,722.8 927.6,683.0 940.5,669.1 C952.1,656.5 963.8,638.0 975.4,638.0 C990.3,638.0 1005.1,646.5 1020.0,650.3 C1029.0,652.6 1038.1,653.1 1047.1,656.9 C1057.1,661.2 1067.2,709.9 1077.2,713.4 C1084.8,716.1 1092.4,716.3 1100.0,718.0 C1106.3,719.4 1112.5,722.7 1118.8,722.7 C1131.4,722.7 1143.9,710.1 1156.5,704.8 C1169.0,699.5 1181.6,696.6 1194.1,690.7 C1202.9,686.6 1211.7,680.8 1220.5,674.7 C1228.0,669.5 1235.5,662.4 1243.0,656.8 C1248.7,652.5 1254.3,647.2 1260.0,644.6 C1272.3,638.9 1284.5,632.7 1296.8,632.7 C1309.3,632.7 1321.9,638.9 1334.4,646.9 C1346.4,654.6 1364.5,721.2 1370.5,721.2 C1376.4,721.2 1394.2,690.7 1406.1,679.7 C1418.0,668.7 1435.8,660.3 1441.7,652.5 C1444.5,648.8 1453.0,619.5 1458.6,600.0 C1465.3,576.9 1475.3,520.8 1478.6,520.8 C1484.5,520.8 1502.3,586.5 1514.2,619.4" stroke="#5a3dbf" stroke-width="2.7" fill="none" stroke-linecap="round" stroke-linejoin="round"/><path d="M468.9,615.9 C481.6,610.8 494.3,608.7 507.0,600.6 C518.0,593.6 534.5,552.4 540.0,552.4 C545.9,552.4 563.5,605.8 575.3,624.0 C584.5,638.2 593.8,654.2 603.0,659.0 C611.8,663.5 620.6,667.6 629.4,667.6 C635.7,667.6 641.9,665.9 648.2,664.0 C660.7,660.3 673.1,624.9 685.6,624.9 C697.7,624.9 709.8,630.1 721.9,630.1 C733.3,630.1 750.3,607.3 756.0,607.3 C762.2,607.3 787.2,668.4 793.4,668.4 C799.4,668.4 823.6,621.8 829.6,621.8 C841.5,621.8 889.1,701.1 901.0,701.1 C904.5,701.1 914.8,680.5 921.7,669.1 C926.7,660.8 931.8,648.6 936.8,642.7 C941.8,636.8 946.8,632.7 951.8,629.5 C959.7,624.5 967.5,618.2 975.4,618.2 C986.4,618.2 997.3,628.3 1008.3,631.4 C1021.2,635.1 1034.2,634.4 1047.1,639.9 C1050.2,641.2 1053.4,645.8 1056.5,650.3 C1063.4,660.1 1073.8,695.8 1077.2,697.3 C1081.0,698.9 1092.4,701.1 1100.0,702.6 C1106.3,703.8 1112.5,705.8 1118.8,705.8 C1130.1,705.8 1141.4,696.7 1152.7,692.6 C1166.5,687.6 1180.3,685.4 1194.1,678.5 C1203.5,673.8 1213.0,661.5 1222.4,654.0 C1234.9,644.1 1247.5,633.0 1260.0,626.7 C1272.3,620.5 1284.5,612.4 1296.8,612.4 C1309.3,612.4 1321.9,621.6 1334.4,631.8 C1346.4,641.6 1364.5,699.2 1370.5,699.2 C1376.2,699.2 1393.1,671.2 1404.4,661.0 C1416.8,649.8 1435.5,641.6 1441.7,633.0 C1443.4,630.6 1448.5,611.3 1451.9,600.0 C1460.8,570.4 1474.1,507.7 1478.6,507.7 C1484.5,507.7 1502.3,571.2 1514.2,603.0" stroke="#1cb5a1" stroke-width="2.7" fill="none" stroke-linecap="round" stroke-linejoin="round"/></svg>
<div style="position:absolute;left:694.6px;top:874.5px;width:19px;height:18px;background:#1fbfa9;border-radius:4px;"></div>
<div class="t" style="left:724.5px;top:876.45px;font-size:15px;font-weight:400;color:#5a5e61;letter-spacing:0.15px;-webkit-text-stroke:0.3px #5a5e61;">YouTube</div>
<div style="position:absolute;left:809.7px;top:874.5px;width:19px;height:18px;background:#5b43c2;border-radius:4px;"></div>
<div class="t" style="left:838.7px;top:876.45px;font-size:15px;font-weight:400;color:#5a5e61;letter-spacing:0.15px;-webkit-text-stroke:0.3px #5a5e61;">TikTok</div>
<div style="position:absolute;left:909px;top:874.5px;width:19px;height:18px;background:#d6305f;border-radius:4px;"></div>
<div class="t" style="left:938px;top:876.45px;font-size:15px;font-weight:400;color:#5a5e61;letter-spacing:0.15px;-webkit-text-stroke:0.3px #5a5e61;">Instagram</div>
<div style="position:absolute;left:1035.6px;top:874.5px;width:19px;height:18px;background:#fdc62a;border-radius:4px;"></div>
<div class="t" style="left:1063.8px;top:876.45px;font-size:15px;font-weight:400;color:#5a5e61;letter-spacing:0.15px;-webkit-text-stroke:0.3px #5a5e61;">Facebook</div>
<div style="position:absolute;left:1159.3px;top:874.5px;width:19px;height:18px;background:#2f8fe6;border-radius:4px;"></div>
<div class="t" style="left:1187.4px;top:876.45px;font-size:15px;font-weight:400;color:#5a5e61;letter-spacing:0.15px;-webkit-text-stroke:0.3px #5a5e61;">LinkedIn</div>
<div style="position:absolute;left:393px;top:944px;width:1159px;height:200px;box-sizing:border-box;background:#fff;border:1.5px solid #e4e4e4;border-radius:7px;"></div>
<div class="t" style="left:421.4px;top:968.65px;font-size:19px;font-weight:700;color:#1e1e1e;letter-spacing:0.6px;">Cross-Network Engagement</div>
<div class="t" style="left:421.4px;top:996.00px;font-size:16px;font-weight:400;color:#55595c;letter-spacing:0.2px;-webkit-text-stroke:0.3px #55595c;">See how people are engaging with your posts during the reporting period.</div>
<div style="position:absolute;left:394px;top:1034.5px;width:1157px;height:1px;background:#ebebeb;"></div>
<svg style="position:absolute;left:1504px;top:979.5px;" width="20" height="20" viewBox="0 0 20 20"><g transform="translate(10,10)"><circle r="7" fill="#232323"/><rect x="-2.6" y="-9.8" width="5.2" height="5" rx="1.6" fill="#232323" transform="rotate(0)"/><rect x="-2.6" y="-9.8" width="5.2" height="5" rx="1.6" fill="#232323" transform="rotate(60)"/><rect x="-2.6" y="-9.8" width="5.2" height="5" rx="1.6" fill="#232323" transform="rotate(120)"/><rect x="-2.6" y="-9.8" width="5.2" height="5" rx="1.6" fill="#232323" transform="rotate(180)"/><rect x="-2.6" y="-9.8" width="5.2" height="5" rx="1.6" fill="#232323" transform="rotate(240)"/><rect x="-2.6" y="-9.8" width="5.2" height="5" rx="1.6" fill="#232323" transform="rotate(300)"/><circle r="3.1" fill="#fff"/></g></svg>
</body></html>
